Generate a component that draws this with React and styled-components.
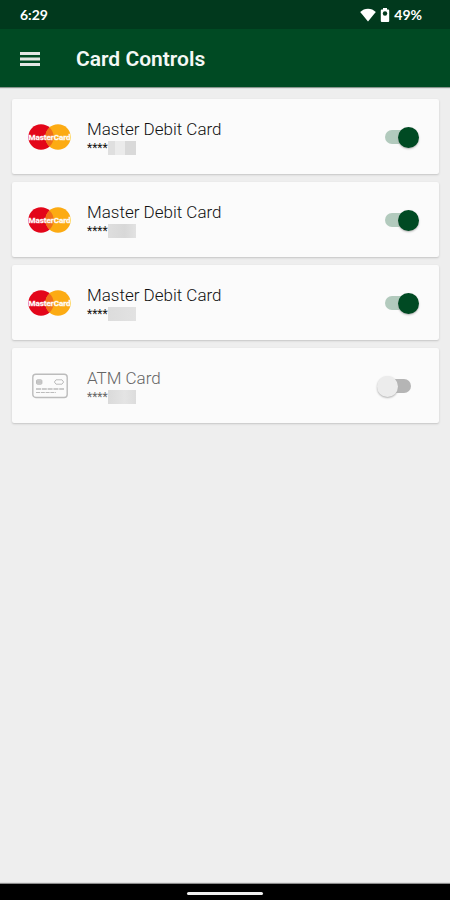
import React, { useState } from 'react';
import styled, { createGlobalStyle } from 'styled-components';

const GlobalStyle = createGlobalStyle`
  * {
    box-sizing: border-box;
  }

  body {
    margin: 0;
    background-color: #eeeeee;
    font-family: Roboto, sans-serif;
  }
`;

const Screen = styled.div`
  display: flex;
  flex-direction: column;
  min-height: 100vh;
`;

const StatusBar = styled.div`
  display: flex;
  align-items: center;
  justify-content: space-between;
  height: 29px;
  padding: 0 28px 0 20px;
  background-color: #01391d;
  color: #ffffff;
  font-family: Lato, sans-serif;
  font-size: 14px;
  font-weight: 700;
`;

const StatusIcons = styled.div`
  display: flex;
  align-items: center;
  gap: 4px;
`;

const Header = styled.header`
  display: flex;
  align-items: center;
  gap: 36px;
  height: 58px;
  padding: 2px 20px 0;
  background-color: #004a23;
  box-shadow: 0 1px 1px #8a968f;
`;

const MenuButton = styled.button`
  display: flex;
  padding: 0;
  border: none;
  background: none;
`;

const Title = styled.h1`
  margin: 0;
  color: #f4f8f5;
  font-size: 21px;
  font-weight: 600;
  line-height: 24px;
`;

const CardList = styled.ul`
  display: flex;
  flex: 1;
  flex-direction: column;
  gap: 8px;
  margin: 0;
  padding: 12px 11px 12px 12px;
  list-style: none;
`;

const CardRow = styled.li`
  display: flex;
  align-items: center;
  height: 75px;
  padding: 1px 20px 0 16px;
  border-radius: 2px;
  background-color: #fbfbfb;
  box-shadow: 0 1px 2px #c4c4c4;
`;

const Logo = styled.div`
  display: flex;
  justify-content: center;
  width: 43px;
  margin-right: 16px;
`;

const CardInfo = styled.div`
  flex: 1;
  color: ${({ $on }) => ($on ? '#111111' : '#666666')};
`;

const CardName = styled.label`
  display: block;
  font-size: 17px;
  font-weight: 300;
  line-height: 20px;
`;

const CardNumber = styled.div`
  display: flex;
  height: 16px;
  font-size: 12px;
  line-height: 18px;
`;

const Mosaic = styled.span`
  width: 28px;
  height: 14px;
  margin-top: 2px;
  background: linear-gradient(90deg, ${({ $shades }) => $shades});
`;

const Switch = styled.input`
  display: flex;
  align-items: center;
  position: relative;
  width: 42px;
  height: 22px;
  margin: 0;
  appearance: none;

  &::before {
    content: '';
    width: 26px;
    height: 14px;
    margin: 0 8px;
    border-radius: 7px;
    background-color: #b5b5b5;
  }

  &::after {
    content: '';
    position: absolute;
    left: 0;
    width: 21px;
    height: 21px;
    border-radius: 50%;
    background-color: #ececec;
    box-shadow: 0 1px 2px #b0b0b0;
  }

  &:checked::before {
    background-color: #b2cabd;
  }

  &:checked::after {
    left: 21px;
    background-color: #004a23;
  }
`;

const NavBar = styled.div`
  display: flex;
  align-items: center;
  justify-content: center;
  height: 16px;
  padding-top: 2px;
  background-color: #000000;
  box-shadow: 0 -1px 1px #8c8c8c;
`;

const NavHandle = styled.div`
  width: 76px;
  height: 3px;
  border-radius: 2px;
  background-color: #efefef;
`;

const WifiIcon = () => (
  <svg width="16" height="14" viewBox="0 0 16 14" fill="#fff">
    <path d="M8 13.5 0.2 4.1C2.3 1.9 5 0.7 8 0.7s5.7 1.2 7.8 3.4z" />
  </svg>
);

const BatteryIcon = () => (
  <svg width="10" height="14" viewBox="0 0 10 14" fill="#fff">
    <path d="M3 0h4v1.5h1.2q1 0 1 1V13q0 1-1 1H1.8q-1 0-1-1V2.5q0-1 1-1H3z" />
    <circle cx="5" cy="5.5" r="2.2" fill="#01391d" />
  </svg>
);

const MenuIcon = () => (
  <svg width="20" height="16" viewBox="0 0 20 16" fill="#e3e6e4">
    <path d="M0 1h20v3H0zM0 6.5h20v3H0zM0 12h20v3H0z" />
  </svg>
);

const MasterCardLogo = () => (
  <svg width="43" height="26" viewBox="0 0 43 26">
    <circle cx="13" cy="13" r="12.7" fill="#e3061a" />
    <circle cx="30" cy="13" r="12.7" fill="#fcab13" />
    <path d="M21.5 3.6a12.7 12.7 0 0 1 0 18.8a12.7 12.7 0 0 1 0-18.8z" fill="#f0701a" />
    <text
      x="21.5"
      y="16"
      textAnchor="middle"
      fontFamily="Roboto, sans-serif"
      fontSize="8"
      fontWeight="700"
      fill="#fff"
      stroke="#fff"
      strokeOpacity="0.4"
      strokeWidth="0.8"
      paintOrder="stroke"
    >
      MasterCard
    </text>
  </svg>
);

const AtmCardIcon = () => (
  <svg width="36" height="26" viewBox="0 0 36 26" fill="none" stroke="#bcbcbc">
    <rect x="0.8" y="1.3" width="34.4" height="23.2" rx="3" strokeWidth="1.4" />
    <rect x="4.5" y="6.8" width="5.4" height="4.4" rx="1" fill="#cfcfcf" />
    <path d="M4.5 9h5.4" />
    <path d="M24 6.8h6l1.6 2.2-1.6 2.2h-6L22.400 9z" />
    <path d="M4 16h28" strokeWidth="1.6" strokeDasharray="5 0.8" />
    <path d="M4 19.5h20" strokeDasharray="4 0.8" />
  </svg>
);

const cards = [
  { id: 1, name: 'Master Debit Card', on: true, shades: '#dfdfdf 7px, #ebebeb 7px 17px, #d9d9d9 17px' },
  { id: 2, name: 'Master Debit Card', on: true, shades: '#dedede, #d8d8d8 60%, #e2e2e2' },
  { id: 3, name: 'Master Debit Card', on: true, shades: '#dcdcdc, #e2e2e2' },
  { id: 4, name: 'ATM Card', on: false, shades: '#dadada, #e4e4e4 60%, #dcdcdc' },
];

function CardItem({ card }) {
  const [on, setOn] = useState(card.on);
  const inputId = `card-${card.id}`;

  return (
    <CardRow>
      <Logo>{card.name === 'ATM Card' ? <AtmCardIcon /> : <MasterCardLogo />}</Logo>
      <CardInfo $on={on}>
        <CardName htmlFor={inputId}>{card.name}</CardName>
        <CardNumber>
          ****
          <Mosaic $shades={card.shades} />
        </CardNumber>
      </CardInfo>
      <Switch
        id={inputId}
        type="checkbox"
        role="switch"
        checked={on}
        onChange={() => setOn(!on)}
      />
    </CardRow>
  );
}

function App() {
  return (
    <>
      <GlobalStyle />
      <Screen>
        <StatusBar>
          <span>6:29</span>
          <StatusIcons>
            <WifiIcon />
            <BatteryIcon />
            <span>49%</span>
          </StatusIcons>
        </StatusBar>
        <Header>
          <MenuButton aria-label="Menu">
            <MenuIcon />
          </MenuButton>
          <Title>Card Controls</Title>
        </Header>
        <CardList>
          {cards.map((card) => (
            <CardItem key={card.id} card={card} />
          ))}
        </CardList>
        <NavBar>
          <NavHandle />
        </NavBar>
      </Screen>
    </>
  );
}

export default App;
